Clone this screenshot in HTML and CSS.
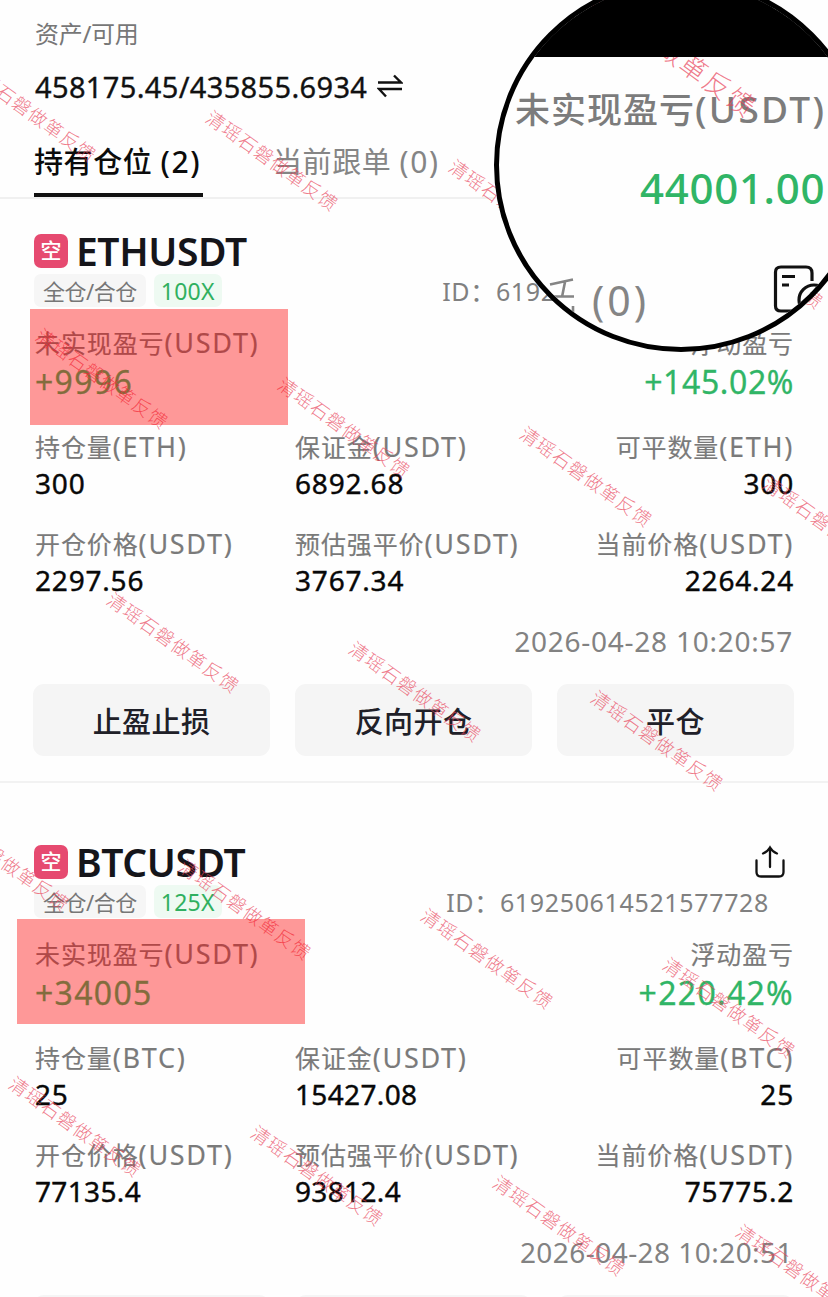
FILE: index.html
```html
<!DOCTYPE html>
<html lang="zh-CN">
<head>
<meta charset="utf-8">
<title>持有仓位</title>
<link rel="stylesheet" href="styles.css">
</head>
<body>
<main class="screen">
  <header class="summary">
    <div class="summary-label">资产/可用</div>
    <div class="summary-value"><span>458175.45/435855.6934</span>
      <svg class="swap" viewBox="0 0 26 26" width="26" height="26"><path d="M1 9.500H24L17 2.500M25 16H2L9 23.500"/></svg>
    </div>
  </header>
  <nav class="tabs">
    <div class="tab active">持有仓位 <span>(2)</span></div>
    <div class="tab">当前跟单 <span>(0)</span></div>
  </nav>

  <section class="position">
    <div class="title"><span class="side">空</span><h2>ETHUSDT</h2></div>
    <div class="meta"><span class="tag">全仓/合仓</span><span class="tag lever">100X</span><span class="oid oid-eth">ID：619250614521577728</span></div>
    <div class="pnl">
      <div><div class="label">未实现盈亏<span>(USDT)</span></div><div class="gain">+9996</div></div>
      <div class="end"><div class="label">浮动盈亏</div><div class="gain tight">+145.02%</div></div>
    </div>
    <div class="grid">
      <div><div class="label">持仓量<span>(ETH)</span></div><div class="value">300</div></div>
      <div><div class="label">保证金<span>(USDT)</span></div><div class="value">6892.68</div></div>
      <div class="end"><div class="label">可平数量<span>(ETH)</span></div><div class="value">300</div></div>
      <div><div class="label">开仓价格<span>(USDT)</span></div><div class="value">2297.56</div></div>
      <div><div class="label">预估强平价<span>(USDT)</span></div><div class="value">3767.34</div></div>
      <div class="end"><div class="label">当前价格<span>(USDT)</span></div><div class="value">2264.24</div></div>
    </div>
    <div class="time">2026-04-28 10:20:57</div>
    <div class="actions"><button>止盈止损</button><button>反向开仓</button><button>平仓</button></div>
    <div class="mark mark-eth"></div>
  </section>

  <section class="position second">
    <div class="title"><span class="side">空</span><h2>BTCUSDT</h2>
      <svg class="share" viewBox="0 0 32 34" width="32" height="34"><path d="M16 22V3M9 8.500Q13.500 7 16 2.500Q18.500 7 23 8.500M2.500 15.500V27Q2.500 31.500 7 31.500H25Q29.500 31.500 29.500 27V15.500"/></svg>
    </div>
    <div class="meta"><span class="tag">全仓/合仓</span><span class="tag lever">125X</span><span class="oid">ID：619250614521577728</span></div>
    <div class="pnl">
      <div><div class="label">未实现盈亏<span>(USDT)</span></div><div class="gain">+34005</div></div>
      <div class="end"><div class="label">浮动盈亏</div><div class="gain">+220.42%</div></div>
    </div>
    <div class="grid">
      <div><div class="label">持仓量<span>(BTC)</span></div><div class="value">25</div></div>
      <div><div class="label">保证金<span>(USDT)</span></div><div class="value narrow">15427.08</div></div>
      <div class="end"><div class="label">可平数量<span>(BTC)</span></div><div class="value">25</div></div>
      <div><div class="label">开仓价格<span>(USDT)</span></div><div class="value narrow">77135.4</div></div>
      <div><div class="label">预估强平价<span>(USDT)</span></div><div class="value narrow">93812.4</div></div>
      <div class="end"><div class="label">当前价格<span>(USDT)</span></div><div class="value">75775.2</div></div>
    </div>
    <div class="time">2026-04-28 10:20:51</div>
    <div class="actions"><div class="stub-button"></div><div class="stub-button"></div><div class="stub-button"></div></div>
    <div class="mark mark-btc"></div>
  </section>

  <svg class="watermarks" viewBox="0 0 828 1297" width="828" height="1297">
    <g transform="translate(1 0)">
      <text transform="translate(-28 72) rotate(35.6)" x="-9" y="6">清瑶石磐做箪反馈</text>
      <text transform="translate(214 121) rotate(35.6)" x="-9" y="6">清瑶石磐做箪反馈</text>
      <text transform="translate(457 170) rotate(35.6)" x="-9" y="6">清瑶石磐做箪反馈</text>
      <text transform="translate(699 219) rotate(35.6)" x="-9" y="6">清瑶石磐做箪反馈</text>
      <text transform="translate(44 339) rotate(35.6)" x="-9" y="6">清瑶石磐做箪反馈</text>
      <text transform="translate(286 388) rotate(35.6)" x="-9" y="6">清瑶石磐做箪反馈</text>
      <text transform="translate(528 437) rotate(35.6)" x="-9" y="6">清瑶石磐做箪反馈</text>
      <text transform="translate(771 487) rotate(35.6)" x="-9" y="6">清瑶石磐做箪反馈</text>
      <text transform="translate(115 603) rotate(35.6)" x="-9" y="6">清瑶石磐做箪反馈</text>
      <text transform="translate(357 652) rotate(35.6)" x="-9" y="6">清瑶石磐做箪反馈</text>
      <text transform="translate(599 701) rotate(35.6)" x="-9" y="6">清瑶石磐做箪反馈</text>
      <text transform="translate(-55 821) rotate(35.6)" x="-9" y="6">清瑶石磐做箪反馈</text>
      <text transform="translate(187 870) rotate(35.6)" x="-9" y="6">清瑶石磐做箪反馈</text>
      <text transform="translate(429 919) rotate(35.6)" x="-9" y="6">清瑶石磐做箪反馈</text>
      <text transform="translate(671 968) rotate(35.6)" x="-9" y="6">清瑶石磐做箪反馈</text>
      <text transform="translate(17 1087) rotate(35.6)" x="-9" y="6">清瑶石磐做箪反馈</text>
      <text transform="translate(259 1136) rotate(35.6)" x="-9" y="6">清瑶石磐做箪反馈</text>
      <text transform="translate(501 1186) rotate(35.6)" x="-9" y="6">清瑶石磐做箪反馈</text>
      <text transform="translate(744 1235) rotate(35.6)" x="-9" y="6">清瑶石磐做箪反馈</text>
    </g>
  </svg>

  <aside class="lens">
    <div class="lens-bar"></div>
    <div class="lens-label">未实现盈亏<span>(USDT)</span></div>
    <div class="lens-value">44001.00</div>
    <div class="lens-count">(0)</div>
    <svg class="lens-art" viewBox="499 -17 364 364" width="364" height="364">
      <path class="stub" d="M550 284.500L573 279.500M565 282L562 297M540 296.500H574M573 306V312"/>
      <path class="doc" d="M812 281V273Q812 267 806 267H781Q775.500 267 775.500 272V306Q775.500 311 781 311H800M782 276.500H795M782 285H789"/>
      <circle class="doc" cx="814" cy="300" r="15"/><circle class="doc" cx="817" cy="299" r="7.500"/>
      <text class="lens-mark" transform="translate(577 -17) rotate(36)" x="-14" y="10">清瑶石磐做箪反馈</text>
      <path d="M499 -17H863V57H499Z"/>
    </svg>
  </aside>
</main>
</body>
</html>
```
FILE: styles.css
```css
* { box-sizing: border-box; }
body {
  margin: 0;
  background: #fefefe;
  color: #111;
  font-family: "Noto Sans", "Noto Sans CJK SC", sans-serif;
}
.screen { position: relative; width: 828px; height: 1297px; overflow: hidden; }
.summary { height: 134px; padding: 18px 35px 0; }
.summary-label { height: 32px; line-height: 32px; font-size: 24px; color: #777; letter-spacing: -0.3px; }
.summary-value { display: flex; align-items: center; gap: 10px; height: 38px; margin-top: 17px; font-size: 29px; letter-spacing: 0.35px; -webkit-text-stroke: 0.35px #111; }
.swap { fill: none; stroke: #111; stroke-width: 2.4; }
.tabs { display: flex; gap: 70px; height: 65px; padding: 0 34px; border-bottom: 2px solid #f0f0f0; }
.tab { width: 169px; height: 63px; line-height: 55px; font-size: 29px; color: #858585; white-space: nowrap; letter-spacing: 0.6px; }
.tab span { font-size: 30px; letter-spacing: 1.6px; }
.tab.active { color: #0b0b0b; font-weight: 500; border-bottom: 4px solid #111; }

.position { position: relative; height: 584px; padding: 31px 35px 0; border-bottom: 2px solid #f2f2f2; }
.second { padding-top: 58px; height: 640px; border: 0; }
.title { display: flex; align-items: center; height: 42px; }
.side { width: 34px; height: 34px; margin: 0 8px 0 -1px; border-radius: 7px; background: #e64a70; color: #fff; font-size: 21px; line-height: 33px; text-align: center; font-weight: 500; }
.title h2 { margin: 0; font-size: 39px; line-height: 42px; font-weight: 600; color: #15151a; letter-spacing: -0.4px; }
.share { margin: 0 7px 0 auto; fill: none; stroke: #111; stroke-width: 2.3; stroke-linecap: round; }
.meta { display: flex; height: 36px; margin-left: -1px; align-items: center; }
.tag { height: 33px; padding: 0 9px; margin-right: 8px; border-radius: 7px; background: #f6f6f6; color: #777; font-size: 22px; line-height: 34px; letter-spacing: -0.5px; }
.lever { background: #eefaf2; color: #30b060; padding: 0 7px; font-size: 23px; letter-spacing: 0.3px; }
.oid { margin-left: auto; margin-right: 24px; font-size: 25px; letter-spacing: 0.65px; color: #808080; white-space: nowrap; }
.oid-eth { margin-right: 28px; }
.label { height: 36px; line-height: 36px; font-size: 25px; letter-spacing: 0.9px; color: #7a7a7a; white-space: nowrap; -webkit-text-stroke: 0.15px #7a7a7a; }
.label span { font-size: 27px; letter-spacing: 1.7px; }
.end { text-align: right; }
.end .label { margin-right: -1px; }
.end .value, .end .gain { margin-right: -1px; }
.pnl { display: flex; justify-content: space-between; height: 121px; padding-top: 17px; }
.gain { height: 42px; line-height: 42px; font-size: 32px; letter-spacing: 1.3px; color: #30b566; -webkit-text-stroke: 0.3px #30b566; }
.gain.tight { letter-spacing: 0.6px; }
.grid { display: grid; grid-template-columns: 260px 1fr 1fr; grid-auto-rows: 97px; }
.value { height: 36px; line-height: 36px; font-size: 28px; letter-spacing: 0.8px; color: #080808; -webkit-text-stroke: 0.4px #080808; }
.value.narrow { letter-spacing: 0.35px; }
.time { height: 36px; line-height: 36px; margin-top: 0; margin-bottom: 25px; font-size: 28px; letter-spacing: 0.75px; color: #828282; text-align: right; }
.second .time { letter-spacing: 0.45px; }
.actions { display: grid; grid-template-columns: repeat(3, 1fr); gap: 25px; margin: 0 -1px 0 -2px; }
.actions button, .stub-button { height: 72px; border: 0; border-radius: 11px; background: #f5f5f5; color: #202028; font: 500 29px "Noto Sans", "Noto Sans CJK SC", sans-serif; letter-spacing: 0.4px; }

.mark { position: absolute; background: rgba(255, 0, 0, 0.4); z-index: 2; }
.mark-eth { left: 30px; top: 110px; width: 258px; height: 116px; }
.mark-btc { left: 17px; top: 136px; width: 288px; height: 105px; }

.watermarks { position: absolute; inset: 0; z-index: 1; fill: rgba(232, 65, 88, 0.7); font-size: 18.5px; font-weight: 300; letter-spacing: 1.2px; font-family: "Noto Sans CJK SC", sans-serif; }

.lens { position: absolute; z-index: 3; left: 494px; top: -22px; width: 374px; height: 374px; border: 5px solid #000; border-radius: 50%; background: #fefefe; overflow: hidden; white-space: nowrap; }
.lens-bar { height: 74px; background: #000; }
.lens-label { margin: 27px 0 0 16px; line-height: 50px; font-size: 35px; letter-spacing: 1px; color: #7c7c7c; font-weight: 500; }
.lens-label span { font-size: 37px; letter-spacing: 2.3px; }
.lens-value { margin: 23px 0 0 141px; line-height: 60px; font-size: 42px; font-weight: 500; letter-spacing: 0.7px; color: #30b566; }
.lens-count { margin: 52px 0 0 93px; line-height: 60px; font-size: 41px; letter-spacing: 3px; color: #858585; }
.lens-art { position: absolute; inset: 0; }
.stub { fill: none; stroke: #858585; stroke-width: 2.6; }
.doc { fill: none; stroke: #111; stroke-width: 3.2; }
.lens-mark { font-size: 27px; font-weight: 300; letter-spacing: 2px; fill: rgba(232, 65, 88, 0.7); font-family: "Noto Sans CJK SC", sans-serif; }
```
